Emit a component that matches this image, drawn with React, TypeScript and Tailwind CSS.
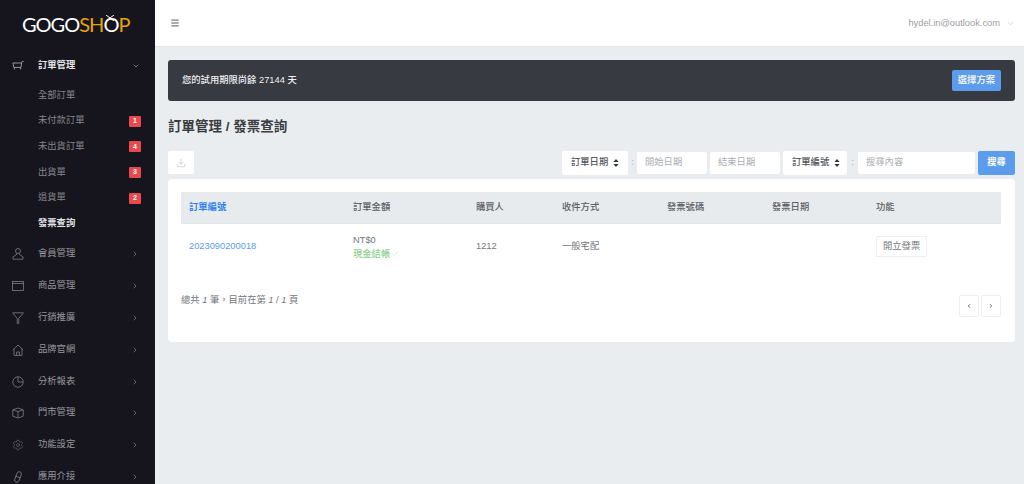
import { ChevronDown, ChevronRight, ChevronLeft, Menu, Settings, Download, Check } from 'lucide-react'
import type { ReactNode } from 'react'

const font = { fontFamily: '"Liberation Sans", "Noto Sans CJK TC", sans-serif' }

function Icon({ children }: { children: ReactNode }) {
  return (
    <svg width="12" height="12" viewBox="0 0 12 12" fill="none" stroke="#7d7d83" strokeWidth="0.8" className="shrink-0">
      {children}
    </svg>
  )
}

const subItems = [
  { label: '全部訂單' },
  { label: '未付款訂單', badge: 1 },
  { label: '未出貨訂單', badge: 4 },
  { label: '出貨單', badge: 3 },
  { label: '退貨單', badge: 2 },
  { label: '發票查詢', active: true },
]

const navItems = [
  {
    label: '會員管理',
    icon: (
      <Icon>
        <circle cx="6" cy="3" r="2.5" />
        <path d="M4.6 5.3v1.2L1 8.8v2.4h10V8.8L7.4 6.5V5.3" />
      </Icon>
    ),
  },
  {
    label: '商品管理',
    icon: (
      <Icon>
        <rect x="0.5" y="1.5" width="11" height="9" />
        <path d="M.5 3.5h11" />
      </Icon>
    ),
  },
  {
    label: '行銷推廣',
    icon: (
      <Icon>
        <path d="M.6.8h10.8L6.8 6.4v5H5.2v-5z" />
      </Icon>
    ),
  },
  {
    label: '品牌官網',
    icon: (
      <Icon>
        <path d="M.8 6 6 1l5.2 5M2 5v6.4h8V5M4.6 11.4V8h2.8v3.4" />
      </Icon>
    ),
  },
  {
    label: '分析報表',
    icon: (
      <Icon>
        <circle cx="6" cy="6" r="5.2" />
        <path d="M6 .8V6h5.2" />
      </Icon>
    ),
  },
  {
    label: '門市管理',
    icon: (
      <Icon>
        <path d="M.8 2.8 6 1l5.2 1.8v6.4L6 11 .8 9.2zM.8 2.8 6 4.6l5.2-1.8M6 4.6V11" />
      </Icon>
    ),
  },
  { label: '功能設定', icon: <Settings size={12} strokeWidth={1} color="#7d7d83" className="shrink-0" /> },
  {
    label: '應用介接',
    icon: (
      <Icon>
        <rect x="3.8" y="0.5" width="4.4" height="11" rx="2.2" transform="rotate(22 6 6)" />
        <path d="M3.4 5.2 8.6 6.8" />
      </Icon>
    ),
  },
]

function Sidebar() {
  return (
    <aside className="w-[155px] h-[484px] shrink-0 overflow-hidden bg-[#16151e] text-[9.3px]">
      <div className="h-[48px] flex items-center pl-[22px] text-[20px] leading-none tracking-[-1px] font-['Lato',sans-serif] text-white">
        GOGO<span className="text-[#e5a50a]">SH</span>
        <span className="relative">
          O
          <svg className="absolute left-[2px] -top-[1px]" width="10" height="7" viewBox="0 0 10 7" fill="none" stroke="#16151e" strokeWidth="2">
            <path d="M0 3h10" />
          </svg>
          <svg className="absolute left-[2px] top-[1px]" width="10" height="6" viewBox="0 0 10 6" fill="none" stroke="#fff" strokeWidth="1">
            <path d="M1 0l8 6M9 0L1 6" />
          </svg>
        </span>
        <span className="text-[#e5a50a]">P</span>
      </div>

      <div className="h-[32px] mt-[2px] flex items-center pl-[12px] pr-[15px] text-[#e4e4e6] font-bold">
        <svg width="12" height="12" viewBox="0 0 12 12" fill="none" stroke="#a3a3a8" strokeWidth="0.9" className="shrink-0">
          <path d="M.8 3h8.8l.6-1.6h1.4M1 3l.8 4.4h7.2L9.6 3M2.4 7.4v2M8.6 7.4v2" />
        </svg>
        <span className="ml-[14px] flex-1">訂單管理</span>
        <ChevronDown size={8} strokeWidth={1.8} className="text-[#b4b4b9]" />
      </div>

      <div className="mt-[1px]">
        {subItems.map((item) => (
          <div key={item.label} className={`h-[25.6px] flex items-center pl-[38px] pr-[14px] ${item.active ? 'text-[#e4e4e6] font-bold' : 'text-[#85858b]'}`}>
            <span className="flex-1">{item.label}</span>
            {item.badge && (
              <span className="w-[12px] h-[11px] rounded-[1px] bg-[#e9484d] text-white text-[7px] font-bold flex items-center justify-center">
                {item.badge}
              </span>
            )}
          </div>
        ))}
      </div>

      <div className="mt-[2px]">
        {navItems.map((item) => (
          <div key={item.label} className="h-[31.8px] flex items-center pl-[12px] pr-[16px] text-[#96969c]">
            {item.icon}
            <span className="ml-[14px] flex-1">{item.label}</span>
            <ChevronRight size={8} strokeWidth={1.8} />
          </div>
        ))}
      </div>
    </aside>
  )
}

function FilterSelect({ label, className }: { label: string; className: string }) {
  return (
    <div className={`h-[24px] bg-white rounded-[2px] flex items-center pl-[9px] gap-[5px] text-[#55585d] font-medium ${className}`}>
      {label}
      <svg width="6" height="8" viewBox="0 0 6 8" fill="#33363b">
        <path d="M3 0l2.6 3H.4zM3 8 .4 5h5.2z" />
      </svg>
    </div>
  )
}

function FilterInput({ label, className }: { label: string; className: string }) {
  return <div className={`h-[22px] bg-white rounded-[2px] flex items-center px-[8px] text-[#a9adb3] ${className}`}>{label}</div>
}

const headers = ['訂單編號', '訂單金額', '購買人', '收件方式', '發票號碼', '發票日期', '功能']
const gridCols = 'grid grid-cols-[164px_123px_86px_105px_105px_104px_1fr]'

function App() {
  return (
    <div style={font} className="w-[1024px] h-[484px] overflow-hidden flex bg-[#e9edf0]">
      <Sidebar />
      <main className="flex-1 min-w-0 text-[9.3px] text-[#74777c]">
        <header className="h-[47px] bg-white border-b border-[#e2e5e9] flex items-center justify-between pl-[15px] pr-[9px]">
          <Menu size={10} strokeWidth={2} className="text-[#3a3d42]" />
          <div className="flex items-center gap-[6px] pt-[1px] text-[#9a9da2] text-[9.3px]">
            hydel.in@outlook.com
            <ChevronDown size={9} strokeWidth={1} />
          </div>
        </header>

        <div className="pl-[13px] pr-[9px]">
          <div className="mt-[13px] h-[41px] bg-[#373a41] rounded-[3px] flex items-center justify-between pl-[14px] pr-[14px] text-[#f0f0f2]">
            <span className="font-medium">您的試用期限尚餘 27144 天</span>
            <span className="h-[21px] px-[6px] bg-[#5b9cec] rounded-[2px] flex items-center font-bold">選擇方案</span>
          </div>

          <h1 className="mt-[16px] text-[13.5px] leading-[20px] font-bold text-[#3a3d42]">訂單管理 / 發票查詢</h1>

          <div className="mt-[14px] flex items-center">
            <div className="w-[26px] h-[23px] -mt-[1px] bg-white rounded-[2px] flex items-center justify-center">
              <Download size={10} strokeWidth={1} className="text-[#9a9da2]" />
            </div>
            <div className="ml-auto flex items-center">
              <FilterSelect label="訂單日期" className="w-[66px]" />
              <span className="w-[9px] text-center text-[#a9adb3]">:</span>
              <FilterInput label="開始日期" className="w-[70px]" />
              <FilterInput label="結束日期" className="w-[70px] ml-[3px]" />
              <FilterSelect label="訂單編號" className="w-[64px] ml-[3px]" />
              <span className="w-[11px] text-center text-[#a9adb3]">:</span>
              <FilterInput label="搜尋內容" className="w-[117px]" />
              <span className="ml-[3px] w-[37px] h-[24px] bg-[#5b9cec] rounded-[2px] flex items-center justify-center text-white font-bold">搜尋</span>
            </div>
          </div>

          <section className="mt-[4px] h-[163px] bg-white rounded-[4px] pt-[13px] pl-[13px] pr-[14px]">
            <div className={`${gridCols} h-[32px] items-center bg-[#e8ebee] border-b border-[#e2e5e9] font-medium text-[#5c5f64]`}>
              {headers.map((h, i) => (
                <div key={h} className={`pl-[8px] ${i === 0 ? 'text-[#2f80ed] font-bold' : ''}`}>{h}</div>
              ))}
            </div>
            <div className={`${gridCols} h-[45px] items-center`}>
              <div className="pl-[8px] text-[#5b9cec]">2023090200018</div>
              <div className="pl-[8px] leading-[14px]">
                <div>NT$0</div>
                <div className="flex items-center gap-[1px] text-[#8ccf8c] font-medium">
                  現金結帳
                  <Check size={8} strokeWidth={1.2} />
                </div>
              </div>
              <div className="pl-[8px]">1212</div>
              <div className="pl-[8px]">一般宅配</div>
              <div />
              <div />
              <div className="pl-[8px]">
                <span className="inline-flex h-[21px] px-[6px] items-center border border-[#eeeff1] rounded-[1px]">開立發票</span>
              </div>
            </div>
            <div className="mt-[22px] flex items-start justify-between">
              <span className="mt-[3px]">總共 <i>1</i> 筆，目前在第 <i>1</i> / <i>1</i> 頁</span>
              <div className="mt-[4px] flex gap-[2px]">
                <span className="w-[20px] h-[22px] border border-[#eeeff1] rounded-[2px] flex items-center justify-center text-[#222]"><ChevronLeft size={6} strokeWidth={2.5} /></span>
                <span className="w-[20px] h-[22px] border border-[#eeeff1] rounded-[2px] flex items-center justify-center text-[#222]"><ChevronRight size={6} strokeWidth={2.5} /></span>
              </div>
            </div>
          </section>
        </div>
      </main>
    </div>
  )
}

export default App
